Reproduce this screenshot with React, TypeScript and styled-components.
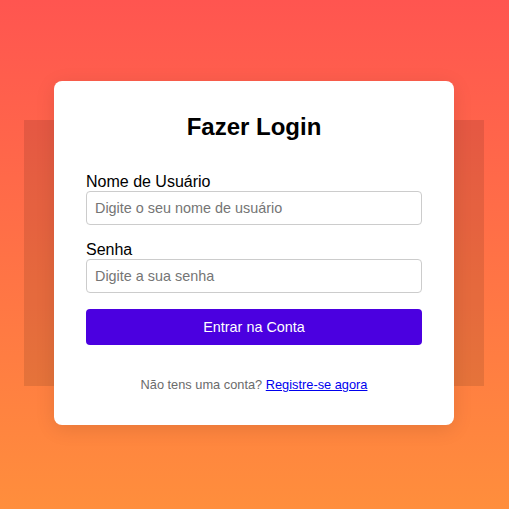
import React from "react";
import styled, { createGlobalStyle } from "styled-components";

const GlobalStyle = createGlobalStyle`
  html, body { margin: 0; padding: 0; }
  body { font-family: "Liberation Sans", Arial, sans-serif; }
  * { box-sizing: border-box; }
`;

const Page = styled.div`
  min-height: 100vh;
  display: flex;
  align-items: center;
  justify-content: center;
  padding: 0 1px 3px 0;
  background: linear-gradient(to bottom, #ff5550, #ff8e3c);
  isolation: isolate;
`;

const Card = styled.div`
  position: relative;
  width: 400px;
  padding: 32px 32px 32px;
  background: #ffffff;
  border-radius: 8px;
  box-shadow: 0 4px 20px rgba(0, 0, 0, 0.1);

  &::before {
    content: "";
    position: absolute;
    top: 39px;
    bottom: 39px;
    left: -30px;
    right: -30px;
    background: rgba(0, 0, 0, 0.1);
    z-index: -1;
  }
`;

const Title = styled.h1`
  margin: 0 0 32px;
  font-size: 24px;
  font-weight: bold;
  text-align: center;
  color: #000;
`;

const Form = styled.form`
  display: flex;
  flex-direction: column;
`;

const Field = styled.div`
  display: flex;
  flex-direction: column;
  margin-bottom: 16px;
`;

const Label = styled.label`
  font-size: 16px;
  color: #000;
`;

const Input = styled.input`
  width: 100%;
  padding: 8px;
  font-family: "Liberation Sans", Arial, sans-serif;
  font-size: 14.4px;
  border: 1px solid #cccccc;
  border-radius: 4px;
  color: #333;
  outline: none;
  &::placeholder { color: #757575; }
`;

const Button = styled.button`
  width: 100%;
  padding: 10px;
  border: none;
  border-radius: 4px;
  background: #4b00e0;
  color: #ffffff;
  font-family: "Liberation Sans", Arial, sans-serif;
  font-size: 14.4px;
  cursor: pointer;
`;

const Footer = styled.p`
  margin: 33px 0 0;
  text-align: center;
  font-size: 12.8px;
  line-height: 14.4px;
  color: #6b6b6b;
`;

const Link = styled.a`
  color: #0000ee;
  text-decoration: underline;
`;

export default function App() {
  return (
    <>
      <GlobalStyle />
      <Page>
        <Card>
          <Title>Fazer Login</Title>
          <Form onSubmit={(e) => e.preventDefault()}>
            <Field>
              <Label htmlFor="user">Nome de Usuário</Label>
              <Input id="user" type="text" placeholder="Digite o seu nome de usuário" />
            </Field>
            <Field>
              <Label htmlFor="pass">Senha</Label>
              <Input id="pass" type="password" placeholder="Digite a sua senha" />
            </Field>
            <Button type="submit">Entrar na Conta</Button>
          </Form>
          <Footer>
            Não tens uma conta? <Link href="#">Registre-se agora</Link>
          </Footer>
        </Card>
      </Page>
    </>
  );
}
